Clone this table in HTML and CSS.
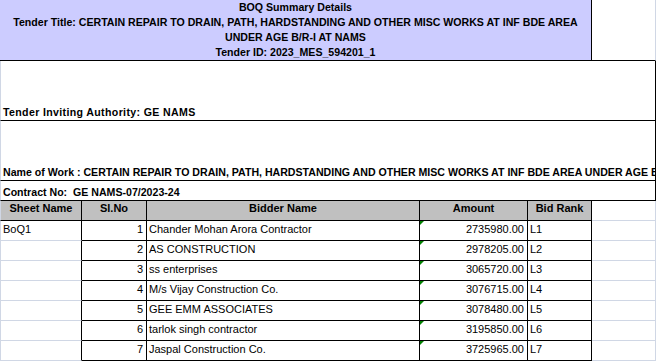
FILE: index.html
```html
<!DOCTYPE html>
<html>
<head>
<meta charset="utf-8">
<link rel="stylesheet" href="styles.css">
</head>
<body>
<div class="sheet">
  <div class="cell title">
    <div>BOQ Summary Details</div>
    <div>Tender Title: CERTAIN REPAIR TO DRAIN, PATH, HARDSTANDING AND OTHER MISC WORKS AT INF BDE AREA</div>
    <div>UNDER AGE B/R-I AT NAMS</div>
    <div>Tender ID: 2023_MES_594201_1</div>
  </div>
  <div class="cell title-side"></div>

  <div class="cell wide authority">Tender Inviting Authority: GE NAMS</div>
  <div class="cell wide">Name of Work : CERTAIN REPAIR TO DRAIN, PATH, HARDSTANDING AND OTHER MISC WORKS AT INF BDE AREA UNDER AGE B/R-I AT NAMS</div>
  <div class="cell wide">Contract No:&nbsp; GE NAMS-07/2023-24</div>

  <div class="cell head first">Sheet Name</div>
  <div class="cell head">Sl.No</div>
  <div class="cell head">Bidder Name</div>
  <div class="cell head">Amount</div>
  <div class="cell head">Bid Rank</div>
  <div class="cell grid"></div>

  <div class="cell sheetname">BoQ1</div>
  <div class="cell num">1</div>
  <div class="cell">Chander Mohan Arora Contractor</div>
  <div class="cell num amt">2735980.00</div>
  <div class="cell">L1</div>
  <div class="cell grid"></div>

  <div class="cell sheetname"></div>
  <div class="cell num">2</div>
  <div class="cell">AS CONSTRUCTION</div>
  <div class="cell num amt">2978205.00</div>
  <div class="cell">L2</div>
  <div class="cell grid"></div>

  <div class="cell sheetname"></div>
  <div class="cell num">3</div>
  <div class="cell">ss enterprises</div>
  <div class="cell num amt">3065720.00</div>
  <div class="cell">L3</div>
  <div class="cell grid"></div>

  <div class="cell sheetname"></div>
  <div class="cell num">4</div>
  <div class="cell">M/s Vijay Construction Co.</div>
  <div class="cell num amt">3076715.00</div>
  <div class="cell">L4</div>
  <div class="cell grid"></div>

  <div class="cell sheetname"></div>
  <div class="cell num">5</div>
  <div class="cell">GEE EMM ASSOCIATES</div>
  <div class="cell num amt">3078480.00</div>
  <div class="cell">L5</div>
  <div class="cell grid"></div>

  <div class="cell sheetname"></div>
  <div class="cell num">6</div>
  <div class="cell">tarlok singh contractor</div>
  <div class="cell num amt">3195850.00</div>
  <div class="cell">L6</div>
  <div class="cell grid"></div>

  <div class="cell sheetname"></div>
  <div class="cell num">7</div>
  <div class="cell">Jaspal Construction Co.</div>
  <div class="cell num amt">3725965.00</div>
  <div class="cell">L7</div>
  <div class="cell grid"></div>
</div>
</body>
</html>
```
FILE: styles.css
```css
html, body {
  margin: 0;
  padding: 0;
  background: #ffffff;
}

.sheet {
  display: grid;
  grid-template-columns: 82px 65px 273px 108px 64px 64px;
  grid-template-rows: 61px 60px 60px 20px 20px repeat(7, 20px);
  width: 656px;
  font-family: "Liberation Sans", Arial, sans-serif;
  font-size: 11px;
  color: #000;
}

.cell {
  box-sizing: border-box;
  border-right: 1px solid #000;
  border-bottom: 1px solid #000;
  padding: 0 3px 4px 2px;
  display: flex;
  align-items: flex-end;
  white-space: nowrap;
  overflow: hidden;
  line-height: 14px;
  position: relative;
}

.title {
  grid-column: 1 / span 5;
  background: #ccccff;
  font-weight: bold;
  font-size: 10.6px;
  flex-direction: column;
  align-items: center;
  justify-content: center;
  line-height: 15px;
  padding: 0 0 1px 0;
}

.title-side {
  border-right-color: #d0d7e5;
  background: #fff;
}

.wide {
  grid-column: 1 / span 6;
  font-weight: bold;
  font-size: 10.6px;
  border-left: 1px solid #d0d7e5;
  padding-left: 2px;
  padding-bottom: 1px;
}

.authority {
  letter-spacing: 0.35px;
}

.head {
  background: #c0c0c0;
  font-weight: bold;
  justify-content: center;
  padding: 0 0 5px 0;
}

.head.first {
  border-left: 1px solid #d0d7e5;
}

.grid {
  border-right-color: #d0d7e5;
  border-bottom-color: #d0d7e5;
}

.sheetname {
  border-left: 1px solid #d0d7e5;
  border-bottom-color: #d0d7e5;
}

.num {
  justify-content: flex-end;
}

.amt::before {
  content: "";
  position: absolute;
  left: 0;
  top: 0;
  width: 0;
  height: 0;
  border-top: 4px solid #008000;
  border-right: 4px solid transparent;
}
```
